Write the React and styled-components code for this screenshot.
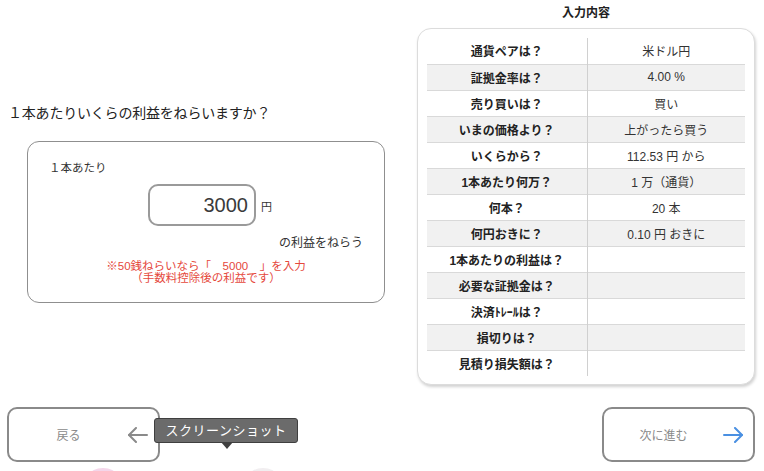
import React from "react";
import styled, { createGlobalStyle } from "styled-components";

const GlobalStyle = createGlobalStyle`
  html, body {
    margin: 0;
    padding: 0;
    background: #ffffff;
  }
  body {
    font-family: "Liberation Sans", "Noto Sans CJK JP", sans-serif;
    color: #222;
  }
  * {
    box-sizing: border-box;
  }
`;

const rows = [
  { label: "通貨ペアは？", value: "米ドル円" },
  { label: "証拠金率は？", value: "4.00 %" },
  { label: "売り買いは？", value: "買い" },
  { label: "いまの価格より？", value: "上がったら買う" },
  { label: "いくらから？", value: "112.53 円 から" },
  { label: "1本あたり何万？", value: "1 万（通貨）" },
  { label: "何本？", value: "20 本" },
  { label: "何円おきに？", value: "0.10 円 おきに" },
  { label: "1本あたりの利益は？", value: "" },
  { label: "必要な証拠金は？", value: "" },
  { label: "決済ﾄﾚｰﾙは？", value: "" },
  { label: "損切りは？", value: "" },
  { label: "見積り損失額は？", value: "" },
];

function Arrow({ color, flip }) {
  return (
    <svg width="20" height="16" viewBox="0 0 20 16" fill="none">
      <g
        stroke={color}
        strokeWidth="2"
        strokeLinecap="round"
        strokeLinejoin="round"
        transform={flip ? "translate(20 0) scale(-1 1)" : undefined}
      >
        <path d="M1 8 H19" />
        <path d="M12 1 L19 8 L12 15" />
      </g>
    </svg>
  );
}

export default function App() {
  return (
    <>
      <GlobalStyle />
      <Page>
        <Top>
          <LeftColumn>
            <Question>１本あたりいくらの利益をねらいますか？</Question>
            <ProfitCard>
              <Label>１本あたり</Label>
              <InputRow>
                <AmountBox>3000</AmountBox>
                <Unit>円</Unit>
              </InputRow>
              <Suffix>の利益をねらう</Suffix>
              <Note>
                ※50銭ねらいなら「　5000　」を入力
                <br />
                （手数料控除後の利益です）
              </Note>
            </ProfitCard>
          </LeftColumn>

          <RightColumn>
            <PanelTitle>入力内容</PanelTitle>
            <SummaryCard>
              <Table>
                <tbody>
                  {rows.map((row, index) => (
                    <Row key={row.label} shaded={index % 2 === 1} last={index === rows.length - 1}>
                      <HeadCell>{row.label}</HeadCell>
                      <ValueCell>{row.value}</ValueCell>
                    </Row>
                  ))}
                </tbody>
              </Table>
            </SummaryCard>
          </RightColumn>
        </Top>

        <Nav>
          <NavButton>
            <NavText>戻る</NavText>
            <Arrow color="#8a8a8a" flip />
          </NavButton>
          <Tooltip>スクリーンショット</Tooltip>
          <NavButton>
            <NavText>次に進む</NavText>
            <Arrow color="#4a90e2" />
          </NavButton>
        </Nav>
        <Blob left={90} tint="#f4d6ea" />
        <Blob left={250} tint="#f1eef0" />
      </Page>
    </>
  );
}

const Page = styled.div`
  position: relative;
  width: 764px;
  height: 471px;
  overflow: hidden;
`;

const Top = styled.div`
  display: flex;
  height: 385px;
`;

const LeftColumn = styled.div`
  width: 417px;
  padding-top: 103px;
`;

const Question = styled.p`
  margin: 0 0 0 8px;
  font-size: 14px;
  line-height: 20px;
  letter-spacing: -0.2px;
  color: #222;
`;

const ProfitCard = styled.div`
  margin: 18px 0 0 27px;
  width: 358px;
  height: 162px;
  border: 1px solid #8f8f8f;
  border-radius: 12px;
  padding: 17px 21px 0;
  display: flex;
  flex-direction: column;
`;

const Label = styled.div`
  font-size: 11.5px;
  line-height: 18px;
  color: #333;
`;

const InputRow = styled.div`
  display: flex;
  align-items: flex-end;
  justify-content: center;
  margin-top: 7px;
  padding-left: 8px;
`;

const AmountBox = styled.div`
  width: 108px;
  height: 42px;
  border: 2px solid #9a9a9a;
  border-radius: 10px;
  font-size: 20px;
  line-height: 38px;
  text-align: right;
  padding-right: 6px;
  color: #3a3a3a;
`;

const Unit = styled.span`
  font-size: 11px;
  line-height: 14px;
  margin: 0 0 12px 5px;
  color: #333;
`;

const Suffix = styled.div`
  margin-top: 8px;
  text-align: right;
  font-size: 12px;
  line-height: 18px;
  color: #333;
`;

const Note = styled.div`
  margin-top: 8px;
  text-align: center;
  font-size: 11.5px;
  line-height: 12px;
  color: #e5483c;
`;

const RightColumn = styled.div`
  width: 338px;
  display: flex;
  flex-direction: column;
`;

const PanelTitle = styled.div`
  height: 28px;
  line-height: 26px;
  text-align: center;
  font-size: 12px;
  font-weight: 700;
  color: #222;
`;

const SummaryCard = styled.div`
  height: 357px;
  border: 1px solid #dcdcdc;
  border-radius: 14px;
  padding: 9px;
  box-shadow: 1px 2px 3px rgba(0, 0, 0, 0.18);
  background: #fff;
`;

const Table = styled.table`
  width: 318px;
  border-collapse: collapse;
  table-layout: fixed;
`;

const Row = styled.tr`
  height: 26px;
  background: ${(props) => (props.shaded ? "#f1f1f1" : "#ffffff")};
  border-bottom: ${(props) => (props.last ? "none" : "1px solid #d9d9d9")};
`;

const HeadCell = styled.td`
  width: 160px;
  padding: 0;
  text-align: center;
  font-size: 12px;
  font-weight: 700;
  color: #222;
  border-right: 1px solid #d0d0d0;
`;

const ValueCell = styled.td`
  padding: 0;
  text-align: center;
  font-size: 12px;
  color: #333;
`;

const Nav = styled.div`
  position: relative;
  display: flex;
  justify-content: space-between;
  margin-top: 22px;
  padding: 0 9px 0 7px;
`;

const NavButton = styled.div`
  width: 153px;
  height: 55px;
  border: 2px solid #8a8a8a;
  border-radius: 10px;
  display: flex;
  align-items: center;
  padding-right: 10px;
  background: #fff;
`;

const NavText = styled.span`
  flex: 1;
  text-align: center;
  font-size: 12px;
  color: #8a8a8a;
`;

const Tooltip = styled.div`
  position: absolute;
  left: 154px;
  top: 11px;
  width: 144px;
  height: 25px;
  background: #6b6b6b;
  border: 1px solid #3f3f3f;
  border-radius: 3px;
  color: #fff;
  font-size: 13px;
  line-height: 23px;
  text-align: center;
  letter-spacing: 0.5px;

  &::after {
    content: "";
    position: absolute;
    left: 66px;
    bottom: -7px;
    width: 0;
    height: 0;
    border-left: 6px solid transparent;
    border-right: 6px solid transparent;
    border-top: 7px solid #3f3f3f;
  }
`;

const Blob = styled.div`
  position: absolute;
  left: ${(props) => props.left}px;
  top: 468px;
  width: 26px;
  height: 14px;
  border-radius: 50%;
  background: ${(props) => props.tint};
`;
